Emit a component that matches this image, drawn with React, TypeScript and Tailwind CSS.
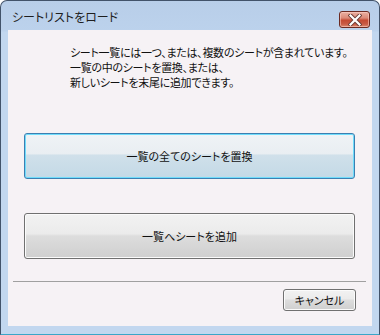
import React from "react";

function CloseButton() {
  return (
    <div className="w-[31px] h-[17px] rounded-[3px] border border-[#6b2a22] flex items-center justify-center shadow-[inset_0_0_0_1px_rgba(255,210,200,0.55)] bg-[linear-gradient(#eab1a3_0%,#dc8a78_40%,#c44a33_55%,#c85a45_80%,#dc8a70_100%)]">
      <svg width="14" height="12" viewBox="0 0 14 12">
        <path
          d="M2.5 1.5 L11.5 10.5 M11.5 1.5 L2.5 10.5"
          stroke="#6a3a35"
          strokeWidth="4"
          strokeLinecap="square"
        />
        <path
          d="M2.5 1.5 L11.5 10.5 M11.5 1.5 L2.5 10.5"
          stroke="#ffffff"
          strokeWidth="2.2"
          strokeLinecap="square"
        />
      </svg>
    </div>
  );
}

const grayBtn =
  "rounded-[3px] border border-[#707070] shadow-[inset_0_0_0_1px_#fbfbfb] flex items-center justify-center text-[11px] text-[#111] [font-feature-settings:'palt'] bg-[linear-gradient(#f2f2f2_0%,#ebebeb_45%,#dddddd_50%,#cfcfcf_100%)]";

export default function App() {
  return (
    <div className="w-[380px] h-[335px] overflow-hidden bg-white font-['Noto_Sans_CJK_JP','Noto_Sans',sans-serif]">
      <div className="w-[380px] h-[335px] flex flex-col rounded-t-[7px] border border-[#42536a] border-b-[#3aa6c8] bg-[linear-gradient(#b8cee9_0px,#bcd2ec_30px,#c2d7ef_31px,#c2d7ef_100%)]">
        <div className="h-[29px] flex items-center justify-between pl-[11px] pr-[9px] shrink-0">
          <span className="text-[12px] text-[#1e1e1e] leading-none mt-[3px] [font-feature-settings:'palt']">
            シートリストをロード
          </span>
          <div className="mt-[8px]">
            <CloseButton />
          </div>
        </div>
        <div className="mx-[7px] h-[296px] bg-[#f6f2f5] flex flex-col shrink-0">
          <div className="pl-[62px] pt-[15px] text-[11px] leading-[15px] tracking-[-0.3px] text-[#111] [font-feature-settings:'palt']">
            <p>シート一覧には一つ、または、複数のシートが含まれています。</p>
            <p>一覧の中のシートを置換、または、</p>
            <p>新しいシートを末尾に追加できます。</p>
          </div>
          <div className="ml-[16px] mt-[43px] w-[331px] h-[46px] rounded-[3px] border border-[#3c7fb1] shadow-[inset_0_0_0_1px_#6fdcfb] flex items-center justify-center text-[11px] text-[#111] [font-feature-settings:'palt'] bg-[linear-gradient(#eff3f6_0%,#e9eef2_45%,#d0e0ea_48%,#c3d9e6_100%)]">
            一覧の全てのシートを置換
          </div>
          <div className={"ml-[16px] mt-[34px] w-[331px] h-[46px] " + grayBtn}>
            一覧へシートを追加
          </div>
          <div className="ml-[5px] mr-[6px] mt-[22px] h-px bg-[#a0a0a0]" />
          <div className="flex justify-end pr-[16px] mt-[7px]">
            <div className={"w-[73px] h-[22px] " + grayBtn}>キャンセル</div>
          </div>
        </div>
      </div>
    </div>
  );
}
